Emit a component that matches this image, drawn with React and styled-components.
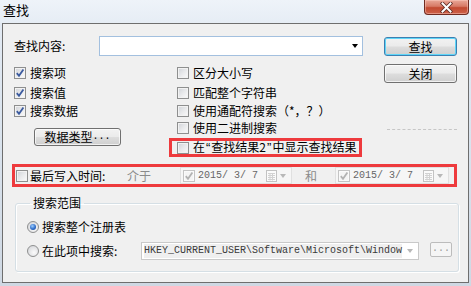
import React from 'react';
import styled, { createGlobalStyle } from 'styled-components';

const GlobalStyle = createGlobalStyle`
  html, body {
    margin: 0;
    padding: 0;
  }
  body {
    font-family: "Noto Sans CJK SC", "Liberation Sans", sans-serif;
    font-size: 12px;
    color: #000;
  }
`;

const Window = styled.div`
  width: 471px;
  height: 286px;
  display: flex;
  flex-direction: column;
  overflow: hidden;
  background: linear-gradient(180deg, #e4ebf4 0%, #dce5ef 40%, #cfd8e3 100%);
`;

const TitleBar = styled.div`
  height: 23px;
  flex: none;
  display: flex;
  justify-content: space-between;
  align-items: flex-start;
  background: linear-gradient(180deg, #eef3f9 0%, #e6edf5 100%);
`;

const Title = styled.span`
  font-size: 13px;
  line-height: 14px;
  padding: 3px 0 0 3px;
`;

const CloseButton = styled.div`
  width: 45px;
  height: 15px;
  margin-right: 2px;
  box-sizing: border-box;
  border: 1px solid #6f2b21;
  border-top: none;
  border-radius: 0 0 4px 4px;
  background: linear-gradient(180deg, #e9a898 0%, #d77a66 45%, #c24a31 55%, #cd6149 100%);
  box-shadow: inset 0 0 0 1px rgba(255, 210, 200, 0.45);
  display: flex;
  align-items: center;
  justify-content: center;
`;

const Client = styled.div`
  flex: 1;
  margin: 0 2px 3px;
  border: 1px solid #6e6e6e;
  background: #f0f0f0;
  padding: 12px 0 0 11px;
  display: flex;
  flex-direction: column;
`;

const TopArea = styled.div`
  display: flex;
`;

const MainCol = styled.div`
  width: 349px;
  display: flex;
  flex-direction: column;
`;

const ButtonCol = styled.div`
  margin: 1px 0 0 21px;
  display: flex;
  flex-direction: column;
  gap: 8px;
`;

const SearchRow = styled.div`
  display: flex;
  align-items: center;
  height: 20px;
`;

const FieldLabel = styled.span`
  width: ${p => p.$w}px;
  flex: none;
  line-height: 14px;
  color: ${p => (p.$muted ? '#8a8a8a' : '#000')};
`;

const Combo = styled.div`
  width: 264px;
  height: 20px;
  box-sizing: border-box;
  border: 1px solid #a3c0df;
  background: #fff;
  display: flex;
  align-items: center;
  justify-content: flex-end;
  padding-right: 4px;
`;

const Arrow = styled.span`
  width: 0;
  height: 0;
  border-left: 3.5px solid transparent;
  border-right: 3.5px solid transparent;
  border-top: 4px solid ${p => p.$color || '#000'};
`;

const Button = styled.div`
  width: ${p => p.$w}px;
  height: ${p => p.$h}px;
  margin: ${p => p.$m || '0'};
  box-sizing: border-box;
  border: 1px solid ${p => (p.$default ? '#3c7fb1' : '#707070')};
  border-radius: 3px;
  background: linear-gradient(180deg, #f2f2f2 0%, #ebebeb 48%, #dddddd 52%, #cfcfcf 100%);
  box-shadow: inset 0 0 0 1px ${p => (p.$default ? '#5fd6f8' : 'rgba(255, 255, 255, 0.7)')};
  display: flex;
  align-items: center;
  justify-content: center;
  line-height: 12px;
  flex: none;
`;

const Dots = styled.span`
  font-family: "Liberation Mono", monospace;
  font-size: 10px;
`;

const Separator = styled.div`
  margin-top: 38px;
  width: 70px;
  border-top: 1px dashed #c6c6c6;
  align-self: flex-end;
`;

const OptionsGrid = styled.div`
  display: grid;
  grid-template-columns: 163px 1fr;
  margin-top: 8px;
`;

const Column = styled.div`
  display: flex;
  flex-direction: column;
`;

const Option = styled.div`
  display: flex;
  align-items: center;
  gap: 4px;
  height: 18px;
  margin-top: ${p => p.$mt || 0}px;
  white-space: nowrap;
  line-height: 14px;
`;

const FlagOption = styled(Option)`
  box-sizing: border-box;
  height: 19px;
  width: 193px;
  margin-left: -8px;
  padding-left: 5px;
  border: 3px solid #ee3a3d;
`;

const Quote = styled.span`
  font-family: "Liberation Sans", sans-serif;
  font-size: 13px;
  padding: 0 1px;
`;

const Box = styled.span`
  width: 12px;
  height: 12px;
  flex: none;
  box-sizing: border-box;
  border: 1px solid ${p => (p.$disabled ? '#c4c4c4' : '#8e8f8f')};
  background: ${p =>
    p.$disabled
      ? '#f4f4f4'
      : 'linear-gradient(135deg, #cfd2d7 0%, #e8e9eb 50%, #fbfbfb 100%)'};
  box-shadow: inset 0 0 0 1px ${p => (p.$disabled ? '#fafafa' : '#f2f2f2')};
  display: flex;
  align-items: center;
  justify-content: center;
`;

const Check = ({ checked, disabled }) => (
  <Box $disabled={disabled}>
    {checked && (
      <svg width="10" height="10" viewBox="0 0 10 10">
        <path
          d="M1.8 5.2 L4 7.8 L8.4 1.6"
          fill="none"
          stroke={disabled ? '#b2b2b2' : '#3b5a9e'}
          strokeWidth="1.8"
        />
      </svg>
    )}
  </Box>
);

const DateRow = styled.div`
  margin: 7px 0 0 -2px;
  width: 445px;
  height: 23px;
  box-sizing: border-box;
  border: 3px solid #ee3a3d;
  padding-left: 1px;
  display: flex;
  align-items: center;
  white-space: nowrap;
`;

const DatePicker = styled.div`
  width: ${p => p.$w}px;
  height: 17px;
  box-sizing: border-box;
  border: 1px solid #e0e0e0;
  background: #f6f6f6;
  display: flex;
  align-items: center;
  padding: 0 5px 0 2px;
  flex: none;
`;

const DateText = styled.span`
  font-family: "Liberation Mono", "DejaVu Sans Mono", monospace;
  font-size: 10px;
  color: #666;
  margin-left: 3px;
  white-space: pre;
`;

const DateTools = styled.span`
  margin-left: auto;
  display: flex;
  align-items: center;
  gap: 3px;
`;

const CalendarIcon = () => (
  <svg width="11" height="12" viewBox="0 0 11 12">
    <rect x="0.5" y="0.5" width="10" height="11" fill="#fbfbfb" stroke="#c3c3c3" />
    <path d="M2 3.5 H9 M2 5.5 H9 M2 7.5 H9 M2 9.5 H9 M4 3 V10.5 M6.5 3 V10.5" stroke="#d2d2d2" />
  </svg>
);

const GroupBox = styled.fieldset`
  margin: 9px 0 0 1px;
  width: 444px;
  box-sizing: border-box;
  border: 1px solid #d5dfe5;
  border-radius: 3px;
  box-shadow: inset 1px 1px 0 #fff, 1px 1px 0 #fff;
  padding: 0 0 11px 11px;
  min-width: 0;
`;

const Legend = styled.legend`
  margin-left: 3px;
  padding: 0 3px;
  line-height: 14px;
  font-size: 12px;
`;

const RadioRow = styled.div`
  display: flex;
  align-items: center;
  height: 18px;
  margin-top: ${p => p.$mt}px;
  gap: 3px;
  line-height: 14px;
`;

const RadioDot = styled.span`
  width: 12px;
  height: 12px;
  flex: none;
  box-sizing: border-box;
  border-radius: 50%;
  border: 1px solid #8e8f8f;
  background: radial-gradient(circle at 60% 65%, #fbfbfb 0%, #dcdde0 70%, #cfd2d6 100%);
  display: flex;
  align-items: center;
  justify-content: center;
  &::after {
    content: '';
    display: ${p => (p.$on ? 'block' : 'none')};
    width: 6px;
    height: 6px;
    border-radius: 50%;
    background: radial-gradient(circle at 40% 35%, #9fd0ff 0%, #2f6dc9 55%, #163f8c 100%);
  }
`;

const PathCombo = styled.div`
  width: 278px;
  height: 18px;
  box-sizing: border-box;
  border: 1px solid #c9c9c9;
  background: #fff;
  display: flex;
  align-items: center;
  padding: 0 5px 0 2px;
  flex: none;
`;

const PathText = styled.span`
  font-family: "Liberation Mono", "DejaVu Sans Mono", monospace;
  font-size: 10px;
  line-height: 14px;
  color: #3a3a3a;
  background: #efefef;
  white-space: pre;
  margin-right: auto;
`;

const SmallButton = styled.div`
  width: 22px;
  height: 15px;
  margin-left: 8px;
  align-self: flex-start;
  box-sizing: border-box;
  border: 1px solid #bcbcbc;
  border-radius: 2px;
  background: #f5f5f5;
  color: #9a9a9a;
  font-family: "Liberation Mono", monospace;
  font-size: 10px;
  line-height: 12px;
  display: flex;
  justify-content: center;
`;

const Between = styled(FieldLabel)`
  box-sizing: border-box;
  padding-left: 13px;
`;

export default function App() {
  return (
    <>
      <GlobalStyle />
      <Window>
        <TitleBar>
          <Title>查找</Title>
          <CloseButton>
            <svg width="13" height="11" viewBox="0 0 13 11">
              <path d="M2.5 1.5 L10.5 9.5 M10.5 1.5 L2.5 9.5" stroke="#5b2a22" strokeWidth="3.6" strokeLinecap="square" />
              <path d="M2.5 1.5 L10.5 9.5 M10.5 1.5 L2.5 9.5" stroke="#ffffff" strokeWidth="2" strokeLinecap="square" />
            </svg>
          </CloseButton>
        </TitleBar>
        <Client>
          <TopArea>
            <MainCol>
              <SearchRow>
                <FieldLabel $w={85}>查找内容:</FieldLabel>
                <Combo>
                  <Arrow />
                </Combo>
              </SearchRow>
              <OptionsGrid>
                <Column>
                  <Option><Check checked />搜索项</Option>
                  <Option $mt={2}><Check checked />搜索值</Option>
                  <Option><Check checked />搜索数据</Option>
                  <Button $w={87} $h={18} $m="8px 0 0 20px">
                    数据类型<Dots>...</Dots>
                  </Button>
                </Column>
                <Column>
                  <Option><Check />区分大小写</Option>
                  <Option $mt={2}><Check />匹配整个字符串</Option>
                  <Option><Check />使用通配符搜索（*，？）</Option>
                  <Option $mt={-1}><Check />使用二进制搜索</Option>
                  <FlagOption $mt={1}>
                    <Check />
                    <span>在<Quote>“</Quote>查找结果2<Quote>”</Quote>中显示查找结果</span>
                  </FlagOption>
                </Column>
              </OptionsGrid>
            </MainCol>
            <ButtonCol>
              <Button $w={73} $h={19} $default>查找</Button>
              <Button $w={73} $h={19}>关闭</Button>
              <Separator />
            </ButtonCol>
          </TopArea>
          <DateRow>
            <Check />
            <FieldLabel $w={97} style={{ marginLeft: 2 }}>最后写入时间:</FieldLabel>
            <FieldLabel $w={53} $muted>介于</FieldLabel>
            <DatePicker $w={112}>
              <Check checked disabled />
              <DateText>2015/ 3/ 7</DateText>
              <DateTools>
                <CalendarIcon />
                <Arrow $color="#b8b8b8" />
              </DateTools>
            </DatePicker>
            <Between $w={43} $muted>和</Between>
            <DatePicker $w={114}>
              <Check checked disabled />
              <DateText>2015/ 3/ 7</DateText>
              <DateTools>
                <CalendarIcon />
                <Arrow $color="#b8b8b8" />
              </DateTools>
            </DatePicker>
          </DateRow>
          <GroupBox>
            <Legend>搜索范围</Legend>
            <RadioRow $mt={8}>
              <RadioDot $on />
              搜索整个注册表
            </RadioRow>
            <RadioRow $mt={6}>
              <RadioDot />
              <FieldLabel $w={96}>在此项中搜索:</FieldLabel>
              <PathCombo>
                <PathText>HKEY_CURRENT_USER\Software\Microsoft\Window</PathText>
                <Arrow $color="#b8b8b8" />
              </PathCombo>
              <SmallButton>...</SmallButton>
            </RadioRow>
          </GroupBox>
        </Client>
      </Window>
    </>
  );
}
